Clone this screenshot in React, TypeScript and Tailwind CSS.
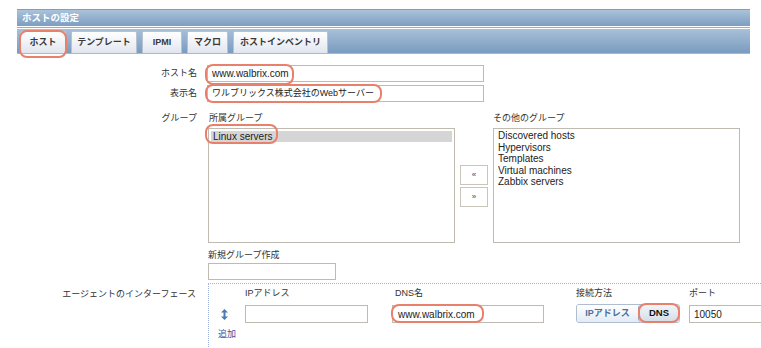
import React from "react";

const jp = { fontFamily: '"Liberation Sans", "Noto Sans CJK JP", sans-serif' };

const tabs = [
  { label: "ホスト", w: "w-[46px]" },
  { label: "テンプレート", w: "w-[66px]" },
  { label: "IPMI", w: "w-[40px]" },
  { label: "マクロ", w: "w-[41px]" },
  { label: "ホストインベントリ", w: "w-[95px]" },
];

const otherGroups = [
  "Discovered hosts",
  "Hypervisors",
  "Templates",
  "Virtual machines",
  "Zabbix servers",
];

const Ring = ({ className }: { className: string }) => (
  <div
    className={`absolute border-2 border-[#e8806c] rounded-[8px] pointer-events-none ${className}`}
  />
);

const SortIcon = () => (
  <svg width="7" height="11" viewBox="0 0 7 11">
    <path d="M3.5 0 L7 3.5 H4.5 V7.5 H7 L3.5 11 L0 7.5 H2.5 V3.5 H0 Z" fill="#4a7bb3" />
  </svg>
);

export default function App() {
  return (
    <div
      className="relative w-[761px] h-[348px] overflow-hidden bg-white text-[#333] text-[10px]"
      style={jp}
    >
      <div className="pl-[17px] pt-[9px]">
        {/* title bar */}
        <div className="w-[733px] h-[17px] border-t border-[#8d9cad] bg-gradient-to-b from-[#abc2da] to-[#7c9ec1] flex items-center pl-[5px] text-white font-bold text-[9.5px]">
          ホストの設定
        </div>
        <div className="w-[733px] h-[1px] bg-white" />
        <div className="w-[733px] h-[1px] bg-[#93aecb]" />
        <div className="w-[733px] h-[1px] bg-white" />

        {/* tabs */}
        <div className="w-[733px] h-[25px] border-b border-[#aab8c8] bg-gradient-to-b from-[#a8c0d8] to-[#7a9cc0] flex items-end gap-[5px] pl-[3px]">
          {tabs.map((t) => (
            <div
              key={t.label}
              className={`${t.w} h-[22px] border border-b-0 border-[#b7c3d2] rounded-t-[2px] bg-gradient-to-b from-white to-[#e1e6ee] flex items-center justify-center font-bold text-[9px] text-[#3a3a3a]`}
            >
              {t.label}
            </div>
          ))}
        </div>

        {/* form */}
        <div className="grid grid-cols-[180px_1fr] gap-x-[10px]">
          <div className="mt-[11px] h-[17px] flex items-center justify-end text-[9px]">ホスト名</div>
          <div className="mt-[11px]">
            <div className="w-[277px] h-[17px] border border-[#bfbbb0] flex items-center pl-[4px] text-[#222]">
              www.walbrix.com
            </div>
          </div>

          <div className="mt-[3px] h-[17px] flex items-center justify-end text-[9px]">表示名</div>
          <div className="mt-[3px]">
            <div className="w-[277px] h-[17px] border border-[#bfbbb0] flex items-center pl-[4px] text-[9px] text-[#222]">
              ワルブリックス株式会社のWebサーバー
            </div>
          </div>

          <div className="mt-[9px] leading-[14px] text-right text-[9px]">グループ</div>
          <div className="mt-[9px] pl-[1px]">
            <div className="flex">
              <div className="w-[247px]">
                <div className="leading-[14px] text-[9px] pl-[1px]">所属グループ</div>
                <div className="mt-[3px] h-[115px] border border-[#bfbbb0] pt-[2px] px-[2px]">
                  <div className="bg-[#d5d5d5] leading-[11px] pl-[2px] text-[#222]">Linux servers</div>
                </div>
              </div>
              <div className="w-[38px] pt-[18px] flex flex-col items-center justify-center gap-[2px]">
                <div className="w-[28px] h-[20px] border border-[#c9c5ba] bg-white flex items-center justify-center text-[8px] text-[#444]">«</div>
                <div className="w-[28px] h-[20px] border border-[#c9c5ba] bg-white flex items-center justify-center text-[8px] text-[#444]">»</div>
              </div>
              <div className="w-[247px]">
                <div className="leading-[14px] text-[9px]">その他のグループ</div>
                <div className="mt-[3px] h-[115px] border border-[#bfbbb0] pt-[1px] pl-[4px] text-[#222] leading-[11.5px]">
                  {otherGroups.map((g) => (
                    <div key={g}>{g}</div>
                  ))}
                </div>
              </div>
            </div>

            <div className="mt-[6px] leading-[12px] text-[9px]">新規グループ作成</div>
            <div className="mt-[2px] w-[128px] h-[17px] border border-[#bfbbb0]" />
          </div>

          <div className="mt-[3px] pt-[5px] leading-[12px] text-right text-[9px] pr-[1px]">
            エージェントのインターフェース
          </div>
          <div className="mt-[3px] pl-[1px]">
            <div className="border-t border-l border-dotted border-[#9fb2e0] h-[70px]">
              <div className="grid grid-cols-[36px_147px_184px_113px_1fr] text-[9px]">
                <div className="mt-[3px] leading-[12px]" />
                <div className="mt-[3px] leading-[12px]">IPアドレス</div>
                <div className="mt-[3px] leading-[12px] pl-[3px]">DNS名</div>
                <div className="mt-[3px] leading-[12px]">接続方法</div>
                <div className="mt-[3px] leading-[12px]">ポート</div>

                <div className="mt-[6px] h-[18px] flex items-center pl-[12px]">
                  <SortIcon />
                </div>
                <div className="mt-[6px]">
                  <div className="w-[123px] h-[18px] border border-[#bfbbb0]" />
                </div>
                <div className="mt-[6px]">
                  <div className="w-[152px] h-[18px] border border-[#bfbbb0] flex items-center pl-[5px] text-[10px] text-[#222]">
                    www.walbrix.com
                  </div>
                </div>
                <div className="mt-[5px]">
                  <div className="w-[104px] h-[19px] border border-[#aebdcf] rounded-[3px] flex overflow-hidden font-bold">
                    <div className="w-[61px] bg-gradient-to-b from-white to-[#e3ebf4] flex items-center justify-center text-[#4c6f9e]">
                      IPアドレス
                    </div>
                    <div className="flex-1 border-l border-[#9aa9bb] rounded-[3px] bg-gradient-to-b from-[#f2f5f9] to-[#d3dde8] flex items-center justify-center text-[#111] text-[9.5px]">
                      DNS
                    </div>
                  </div>
                </div>
                <div className="mt-[6px]">
                  <div className="w-[90px] h-[18px] border border-[#bfbbb0] flex items-center pl-[4px] text-[10px] text-[#222]">
                    10050
                  </div>
                </div>
              </div>
              <div className="mt-[5px] pl-[9px] leading-[12px] text-[9px] text-[#4150a0]">追加</div>
            </div>
          </div>
        </div>
      </div>

      {/* annotation rings */}
      <Ring className="left-[19px] top-[30px] w-[48px] h-[28px]" />
      <Ring className="left-[205px] top-[64px] w-[89px] h-[21px]" />
      <Ring className="left-[205px] top-[84px] w-[177px] h-[19px]" />
      <Ring className="left-[205px] top-[124px] w-[73px] h-[20px]" />
      <Ring className="left-[391px] top-[304px] w-[93px] h-[19px]" />
      <Ring className="left-[638px] top-[303px] w-[42px] h-[20px]" />
    </div>
  );
}
